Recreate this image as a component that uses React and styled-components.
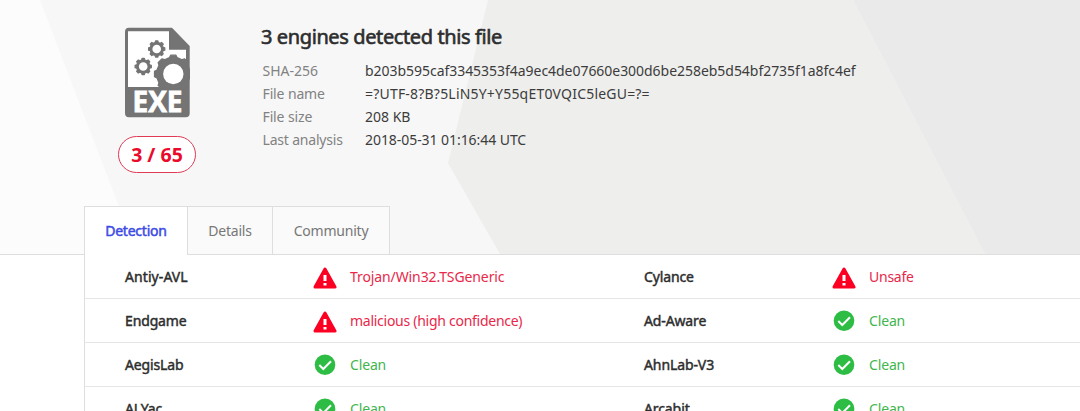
import React from "react";
import styled, { createGlobalStyle } from "styled-components";

const GlobalStyle = createGlobalStyle`
  * { box-sizing: border-box; }
  html, body { margin: 0; background: #fff; overflow: hidden; }
  body { font-family: "Noto Sans", "Open Sans", sans-serif; font-size: 14px; color: #3c3c3c; }
`;

const Page = styled.main`
  width: 1080px;
  height: 411px;
  overflow: hidden;
  background: #fff;
`;

const Header = styled.header`
  position: relative;
  height: 255px;
  padding-left: 84px;
  display: flex;
  flex-direction: column;
  justify-content: space-between;
  background: #f7f7f7;
  border-bottom: 1px solid #dedede;
`;

const Backdrop = styled.svg`
  position: absolute;
  inset: 0;
`;

const Summary = styled.section`
  position: relative;
  display: flex;
  padding-top: 27px;
`;

const Badge = styled.div`
  width: 146px;
  display: flex;
  flex-direction: column;
  align-items: center;
  gap: 18px;
`;

const Ratio = styled.div`
  width: 78px;
  height: 37px;
  border: 1px solid #e03a55;
  border-radius: 19px;
  background: #fff;
  color: #ea0a2a;
  font-size: 19.5px;
  font-weight: 700;
  line-height: 36px;
  text-align: center;
`;

const Facts = styled.div`
  padding-left: 31px;
`;

const Title = styled.h1`
  margin: -3px 0 9px;
  font-size: 20px;
  font-weight: 400;
  line-height: 26px;
  letter-spacing: -0.39px;
  color: #2d2d2d;
  -webkit-text-stroke: 0.6px #2d2d2d;
`;

const FactList = styled.dl`
  margin: 0 0 0 2px;
  display: grid;
  grid-template-columns: 102px auto;
  line-height: 23px;
`;

const Label = styled.dt`
  margin-left: -0.5px;
  color: #828282;
  letter-spacing: ${(p) => p.$track || 0}px;
`;

const Value = styled.dd`
  margin: 0;
  letter-spacing: ${(p) => p.$track || 0}px;
`;

const Tabs = styled.nav`
  position: relative;
  display: flex;
  align-self: flex-start;
  height: 49px;
  margin-bottom: -1px;
  border: 1px solid #dedede;
  border-bottom: 0;
`;

const Tab = styled.a`
  width: ${(p) => p.$width}px;
  display: flex;
  align-items: center;
  justify-content: center;
  background: ${(p) => (p.$active ? "#fff" : "#fafafa")};
  color: ${(p) => (p.$active ? "#3d4be6" : "#777")};
  border-bottom: 1px solid ${(p) => (p.$active ? "#fff" : "#dedede")};
  letter-spacing: -0.22px;
  -webkit-text-stroke: ${(p) => (p.$active ? "0.5px #3d4be6" : "0")};
  & + & { border-left: 1px solid #dedede; }
`;

const Results = styled.section`
  margin-left: 84px;
  border-left: 1px solid #dedede;
`;

const Row = styled.div`
  height: 44px;
  padding-left: 40px;
  display: grid;
  grid-template-columns: 188px 331px 188px 1fr;
  align-items: center;
  border-bottom: 1px solid #e6e6e6;
`;

const Engine = styled.span`
  color: #2d2d2d;
  letter-spacing: ${(p) => p.$track}px;
  -webkit-text-stroke: 0.45px #2d2d2d;
`;

const Verdict = styled.span`
  display: flex;
  align-items: center;
  gap: 13px;
  color: ${(p) => (p.$clean ? "#3fb54d" : "#e8284a")};
  letter-spacing: ${(p) => p.$track}px;
`;

const Glyph = styled.svg`
  flex: none;
  margin-top: ${(p) => p.$drop || 0}px;
`;

function gear(cx, cy, outer, inner, teeth) {
  const points = [];
  const step = (Math.PI * 2) / teeth;
  for (let i = 0; i < teeth; i += 1) {
    const a = i * step - Math.PI / 2;
    [[-0.3, inner], [-0.18, outer], [0.18, outer], [0.3, inner]].forEach(([k, r]) => {
      points.push(`${(cx + r * Math.cos(a + k * step)).toFixed(2)},${(cy + r * Math.sin(a + k * step)).toFixed(2)}`);
    });
  }
  return points.join(" ");
}

const FileIcon = () => (
  <svg width="66" height="91" viewBox="0 0 66 91">
    <path d="M5 .7H48L65.700 19V86.300q0 4-4 4H5q-4 0-4-4V4.700q0-4 4-4z" fill="#747474" />
    <path d="M4 4.300H45V22.800H62V60H4z" fill="#fff" />
    <g fill="#747474" stroke="#747474" strokeWidth="1.200" strokeLinejoin="round">
      <polygon points={gear(49.300, 47, 19, 16.800, 8)} />
      <polygon points={gear(32.700, 22, 8.200, 6.700, 8)} />
      <polygon points={gear(19.200, 39.500, 8.200, 6.700, 8)} />
    </g>
    <g fill="#fff">
      <circle cx="49.300" cy="47" r="10.200" />
      <circle cx="32.700" cy="22" r="4.300" />
      <circle cx="19.200" cy="39.500" r="4.300" />
    </g>
    <text x="33.500" y="85.300" textAnchor="middle" textLength="50" lengthAdjust="spacingAndGlyphs" fontFamily="Open Sans" fontWeight="700" fontSize="28.500" fill="#fff" stroke="#fff" strokeWidth=".8">EXE</text>
  </svg>
);

const Warning = () => (
  <Glyph width="24" height="22" viewBox="0 0 24 22" $drop={3}>
    <path d="M12 2 22 20H2z" fill="#fb0023" stroke="#fb0023" strokeWidth="3" strokeLinejoin="round" />
    <path d="M10.500 8h3v6h-3zM10.500 16h3v2.500h-3z" fill="#fff" />
  </Glyph>
);

const Check = () => (
  <Glyph width="24" height="22" viewBox="0 0 24 22">
    <circle cx="12" cy="10.700" r="10.300" fill="#2dbd45" />
    <path d="m6.300 11 4 4 7.700-7.700" fill="none" stroke="#fff" strokeWidth="2" />
  </Glyph>
);

const facts = [
  ["SHA-256", 0, "b203b595caf3345353f4a9ec4de07660e300d6be258eb5d54bf2735f1a8fc4ef", -0.04],
  ["File name", -0.13, "=?UTF-8?B?5LiN5Y+Y55qET0VQIC5leGU=?=", 0.2],
  ["File size", -0.13, "208 KB", 0],
  ["Last analysis", -0.19, "2018-05-31 01:16:44 UTC", -0.06],
];

const rows = [
  [["Antiy-AVL", 0.08, "Trojan/Win32.TSGeneric", -0.1], ["Cylance", -0.14, "Unsafe", -0.25]],
  [["Endgame", -0.14, "malicious (high confidence)", -0.27], ["Ad-Aware", -0.14, "Clean", -0.15]],
  [["AegisLab", -0.14, "Clean", -0.15], ["AhnLab-V3", -0.1, "Clean", -0.15]],
  [["ALYac", -0.1, "Clean", -0.15], ["Arcabit", -0.1, "Clean", -0.15]],
];

export default function App() {
  return (
    <Page>
      <GlobalStyle />
      <Header>
        <Backdrop width="1080" height="254" viewBox="0 0 1080 254">
          <path d="M0 0H40L125 222 137 254H0z" fill="#fcfcfc" />
          <path d="M488 0H853L985 254H500L448 163z" fill="#eeeeec" />
          <path d="M853 0H1080V254H985z" fill="#eaeaea" />
        </Backdrop>
        <Summary>
          <Badge>
            <FileIcon />
            <Ratio>3 / 65</Ratio>
          </Badge>
          <Facts>
            <Title>3 engines detected this file</Title>
            <FactList>
              {facts.map(([label, labelTrack, value, valueTrack]) => (
                <React.Fragment key={label}>
                  <Label $track={labelTrack}>{label}</Label>
                  <Value $track={valueTrack}>{value}</Value>
                </React.Fragment>
              ))}
            </FactList>
          </Facts>
        </Summary>
        <Tabs>
          <Tab $active $width={102}>Detection</Tab>
          <Tab $width={85}>Details</Tab>
          <Tab $width={117}>Community</Tab>
        </Tabs>
      </Header>
      <Results>
        {rows.map((row, i) => (
          <Row key={i}>
            {row.map(([engine, engineTrack, verdict, verdictTrack]) => (
              <React.Fragment key={engine}>
                <Engine $track={engineTrack}>{engine}</Engine>
                <Verdict $clean={verdict === "Clean"} $track={verdictTrack}>
                  {verdict === "Clean" ? <Check /> : <Warning />}
                  {verdict}
                </Verdict>
              </React.Fragment>
            ))}
          </Row>
        ))}
      </Results>
    </Page>
  );
}
